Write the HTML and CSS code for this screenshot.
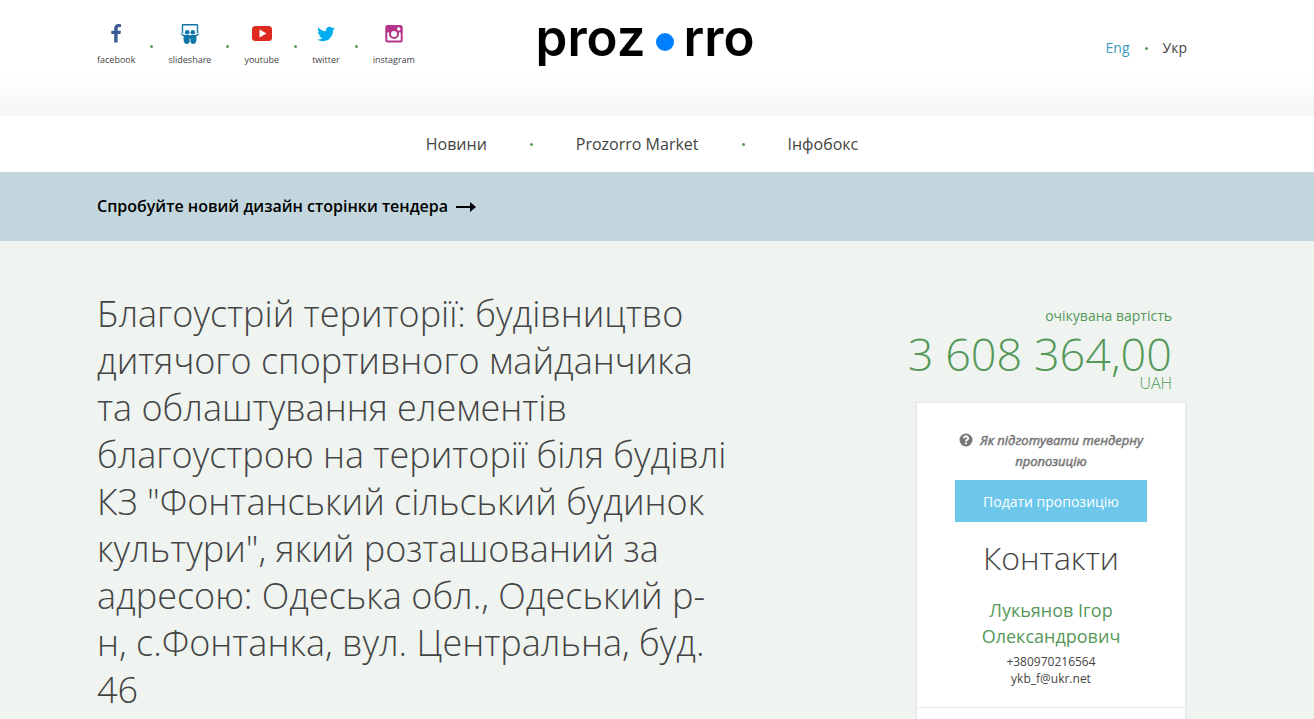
FILE: index.html
```html
<!DOCTYPE html>
<html lang="uk">
<head>
    <meta charset="UTF-8">
    <meta name="viewport" content="width=device-width, initial-scale=1.0">
    <title>Prozorro</title>
    <link rel="stylesheet" href="styles.css">
</head>
<body>
    <header class="header">
        <div class="container header-row">
            <ul class="social">
                <li><a href="#">
                    <svg viewBox="0 0 1792 1792" fill="#3b5998"><path d="M1343 12v264h-157q-86 0-116 36t-30 108v189h293l-39 296h-254v759h-306v-759h-255v-296h255v-218q0-186 104-288.500t277-102.500q147 0 228 12z"/></svg>
                    facebook
                </a></li>
                <li><a href="#">
                    <svg viewBox="0 0 20 20" fill="#0e76a8">
                        <path d="M2.500 9V1.200Q2.500 .7 3 .7h14q.5 0 .5.500V9" fill="none" stroke="#0e76a8" stroke-width="1.400"/>
                        <circle cx="7.200" cy="8.300" r="2.300"/>
                        <circle cx="12.800" cy="8.300" r="2.300"/>
                        <path d="M.7 9Q3 10.800 6 11h3q.7.200 1 .9.300-.7 1-.9h3q3-.2 5.300-2 .3 1.300-3 3.500.5 2.500-.2 5.200-.8 2.300-2.900 2.300-2.200 0-2.500-1.800H9.300Q9 20 6.800 20q-2.100 0-2.900-2.300-.7-2.700-.2-5.200-3.300-2.200-3-3.500z"/>
                        <path d="M10 14.500V20" stroke="#fff" stroke-width=".8"/>
                    </svg>
                    slideshare
                </a></li>
                <li><a href="#">
                    <svg viewBox="0 0 20 20"><rect y="2" width="20" height="15" rx="3.500" fill="#e02a20"/><path d="M7.500 5.500v8l7-4z" fill="#fff"/></svg>
                    youtube
                </a></li>
                <li><a href="#">
                    <svg viewBox="0 0 1792 1792" fill="#00aced"><path d="M1684 408q-67 98-162 167 1 14 1 42 0 130-38 259.500t-115.500 248.500-184.500 210.500-258 146-323 54.500q-271 0-496-145 35 4 78 4 225 0 401-138-105-2-188-64.500t-114-159.500q33 5 61 5 43 0 85-11-112-23-185.500-111.500t-73.500-205.500v-4q68 38 146 41-66-44-105-115t-39-154q0-88 44-163 121 149 294.500 238.500t371.500 99.500q-8-38-8-74 0-134 94.500-228.500t228.500-94.500q140 0 236 102 109-21 205-78-37 115-142 178 93-10 186-50z"/></svg>
                    twitter
                </a></li>
                <li><a href="#">
                    <svg viewBox="0 0 20 20">
                        <rect x="2.300" y="2" width="15.400" height="15.400" rx="1.500" fill="none" stroke="#b5338a" stroke-width="2"/>
                        <path d="M2 2h16v6.500h-4.500a4.500 4.500 0 0 0-7 0H2z" fill="#b5338a"/>
                        <rect x="13.200" y="3.500" width="3" height="3" rx=".5" fill="#fff"/>
                        <circle cx="10" cy="10" r="4" fill="#fff" stroke="#b5338a" stroke-width="2"/>
                    </svg>
                    instagram
                </a></li>
            </ul>
            <a class="logo" href="#">proz<span class="logo-dot"></span>rro</a>
            <div class="lang">
                <a class="lang-link" href="#">Eng</a>
                <span class="dot"></span>
                <span>Укр</span>
            </div>
        </div>
    </header>

    <nav class="container nav">
        <a href="#">Новини</a>
        <span class="dot"></span>
        <a href="#">Prozorro Market</a>
        <span class="dot"></span>
        <a href="#">Інфобокс</a>
    </nav>

    <div class="banner">
        <div class="container">
            <a class="banner-link" href="#">
                Спробуйте новий дизайн сторінки тендера
                <svg viewBox="0 0 20 10"><path d="M0 4h14V0l6 5-6 5V6H0z"/></svg>
            </a>
        </div>
    </div>

    <main class="tender">
        <div class="container tender-row">
            <h1 class="tender-title">Благоустрій території: будівництво дитячого спортивного майданчика та облаштування елементів благоустрою на території біля будівлі КЗ "Фонтанський сільський будинок культури", який розташований за адресою: Одеська обл., Одеський р-н, с.Фонтанка, вул. Центральна, буд. 46</h1>
            <aside class="side">
                <div class="price">
                    <div class="price-label">очікувана вартість</div>
                    <div class="price-value">3&nbsp;608&nbsp;364,00</div>
                    <div class="price-currency">UAH</div>
                </div>
                <div class="card">
                    <div class="card-body">
                        <a class="help" href="#">
                            <svg viewBox="0 0 14 14"><circle cx="7" cy="7" r="6.500" fill="#777"/><path d="M4.700 5.200Q5.200 3.300 7 3.300T9.200 5.200Q9.200 6.200 8 6.800 7 7.300 7 8.600" fill="none" stroke="#fff" stroke-width="1.900"/><path d="M6 9.500h2v1.800H6z" fill="#fff"/></svg>
                            Як підготувати тендерну пропозицію
                        </a>
                        <button class="submit" type="button">Подати пропозицію</button>
                        <h2 class="card-title">Контакти</h2>
                        <div class="person">Лукьянов Ігор Олександрович</div>
                        <div class="contact">+380970216564</div>
                        <div class="contact">ykb_f@ukr.net</div>
                    </div>
                    <div class="card-next"></div>
                </div>
            </aside>
        </div>
    </main>
</body>
</html>
```

FILE: styles.css
```css
* {
    box-sizing: border-box;
}

body {
    margin: 0;
    font-family: "Open Sans", "Noto Sans", sans-serif;
    font-size: 14px;
    color: #444;
    background-color: #fff;
    overflow: hidden;
}

a {
    color: inherit;
    text-decoration: none;
}

.container {
    max-width: 1120px;
    margin: 0 auto;
    padding-right: 30px;
}

.dot {
    width: 3px;
    height: 3px;
    border-radius: 50%;
    background-color: #5a9a5a;
}

/* Header */
.header {
    height: 116px;
    padding-top: 24px;
    background: linear-gradient(#fff 65%, #f5f5f5);
}

.header-row {
    display: grid;
    grid-template-columns: 1fr auto 1fr;
    align-items: start;
}

.social {
    display: flex;
    gap: 33px;
    margin: 0;
    padding: 0;
    list-style: none;
    font-size: 9px;
    line-height: 12px;
}

.social li {
    position: relative;
}

.social li + li::before {
    content: "";
    position: absolute;
    left: -18px;
    top: 21px;
    width: 3px;
    height: 3px;
    border-radius: 50%;
    background-color: #5a9a5a;
}

.social a {
    display: flex;
    flex-direction: column;
    align-items: center;
    gap: 10px;
}

.social svg {
    width: 20px;
    height: 20px;
}

.logo {
    display: flex;
    align-items: flex-start;
    padding-left: 6px;
    font-family: Inter, sans-serif;
    font-size: 51px;
    font-weight: 600;
    line-height: 28px;
    color: #000;
}

.logo-dot {
    width: 18px;
    height: 18px;
    margin: 9px 10px 0;
    border-radius: 50%;
    background-color: #0080ff;
}

.lang {
    display: flex;
    align-items: center;
    justify-content: flex-end;
    gap: 15px;
    padding-top: 14px;
    line-height: 20px;
}

.lang-link {
    color: #3a9cc0;
}

/* Menu */
.nav {
    display: flex;
    align-items: center;
    justify-content: center;
    gap: 43px;
    height: 56px;
    font-size: 16px;
}

.banner {
    padding: 23px 0;
    background-color: #c3d6dd;
}

.banner-link {
    display: flex;
    align-items: center;
    gap: 8px;
    font-size: 16px;
    font-weight: 600;
    line-height: 23px;
    color: #000;
}

.banner-link svg {
    width: 20px;
    height: 10px;
}

/* Tender */
.tender {
    min-height: 478px;
    padding-top: 49px;
    background-color: #eff4f1;
}

.tender-row {
    display: flex;
    justify-content: space-between;
}

.tender-title {
    width: 58%;
    margin: 0;
    font-size: 36px;
    font-weight: 300;
    line-height: 47px;
}

.side {
    width: 280px;
    padding-top: 15px;
}

.price {
    padding-right: 15px;
    text-align: right;
    color: #55985a;
}

.price-label {
    line-height: 22px;
}

.price-value {
    display: flex;
    justify-content: flex-end;
    font-size: 45px;
    font-weight: 300;
    line-height: 54px;
}

.price-currency {
    margin-top: -7px;
    font-size: 16px;
    font-weight: 300;
    line-height: 18px;
}

.card {
    width: 272px;
    margin: 9px 0 0 auto;
    border: 2px solid #eaeaea;
    background-color: #fff;
    text-align: center;
}

.card-body {
    padding: 27px 38px 20px;
}

.help {
    display: block;
    margin-bottom: 8px;
    font-size: 13px;
    font-style: italic;
    line-height: 21px;
    color: #777;
    -webkit-text-stroke: 0.5px #777;
}

.help svg {
    width: 14px;
    height: 14px;
    margin-right: 4px;
    vertical-align: -2px;
}

.submit {
    width: 100%;
    height: 42px;
    border: 0;
    background-color: #6cc7eb;
    color: #fff;
    font-family: inherit;
    font-size: 14px;
    cursor: pointer;
}

.card-title {
    margin: 15px 0 18px;
    font-size: 32px;
    font-weight: 300;
    line-height: 42px;
}

.person {
    margin-bottom: 4px;
    font-size: 18px;
    line-height: 26px;
    color: #55985a;
}

.contact {
    font-size: 12px;
    line-height: 17px;
}

.card-next {
    height: 40px;
    border-top: 1px solid #eaeaea;
}
```
